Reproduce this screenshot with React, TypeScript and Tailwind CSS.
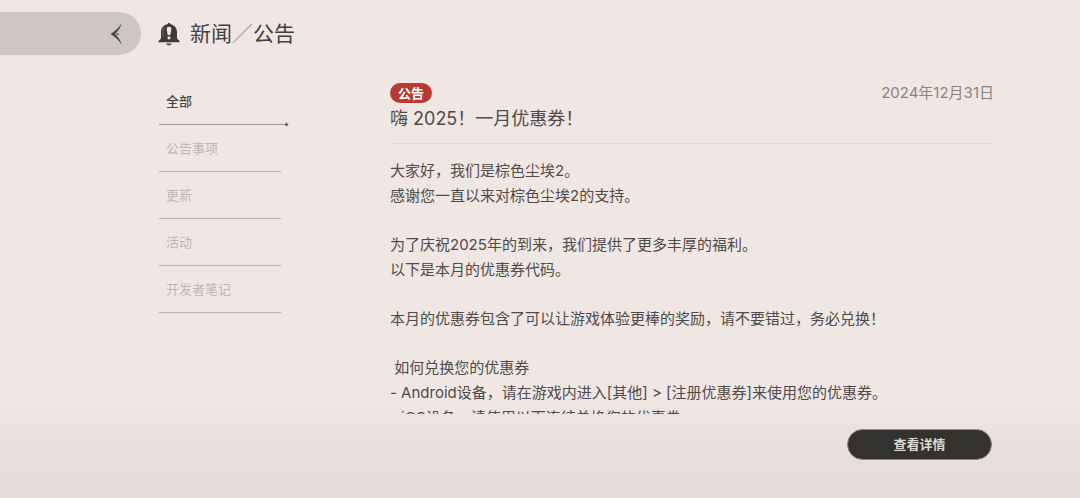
import { useState } from "react";

const CATEGORIES = ["全部", "公告事项", "更新", "活动", "开发者笔记"];

const PARAGRAPHS = [
  ["大家好，我们是棕色尘埃2。", "感谢您一直以来对棕色尘埃2的支持。"],
  ["为了庆祝2025年的到来，我们提供了更多丰厚的福利。", "以下是本月的优惠券代码。"],
  ["本月的优惠券包含了可以让游戏体验更棒的奖励，请不要错过，务必兑换！"],
  [
    " 如何兑换您的优惠券",
    "- Android设备，请在游戏内进入[其他] > [注册优惠券]来使用您的优惠券。",
    "- iOS设备，请使用以下连结兑换您的优惠券。",
  ],
];

function BackIcon() {
  return (
    <svg className="h-6 w-4" viewBox="0 0 16 24" aria-hidden="true">
      <path
        d="M13 1C10 5.500 6 9.500 1.500 12C6 14.500 10 18.500 13 23C11.500 18.500 9 14.500 6 12C9 9.500 11.500 5.500 13 1Z"
        fill="#4a4643"
      />
      <circle cx="8.500" cy="12" r="1.100" fill="#5c5855" />
    </svg>
  );
}

function BellIcon() {
  return (
    <svg className="h-6 w-[22px]" viewBox="0 0 22 24" aria-hidden="true">
      <path
        fillRule="evenodd"
        d="M11 0.500L12.800 2.200C17 3.200 19 6.300 19 10.500V16.500L21.500 19V20.200H0.500V19L3 16.500V10.500C3 6.300 5 3.200 9.200 2.200ZM11 4.800C9.300 4.800 8.500 6 8.700 7.800L9.700 13H12.300L13.300 7.800C13.500 6 12.700 4.800 11 4.800ZM11 14.200A1.600 1.600 0 1 0 11 17.400A1.600 1.600 0 1 0 11 14.200Z"
        fill="#3d3a38"
      />
      <path d="M5 15V10.500C5 7.500 5.800 5.700 7.300 4.800" fill="none" stroke="#8c8784" strokeWidth="0.600" />
      <path d="M8 21.500H14L12.500 23.300H9.500Z" fill="#4a4643" />
    </svg>
  );
}

export default function App() {
  const [active, setActive] = useState(0);

  return (
    <div className="flex h-screen flex-col overflow-hidden bg-[#f0e7e4] bg-[linear-gradient(to_top,#e5dddb_0px,#e7dfdc_50px,#f0e7e4_96px)] font-['Inter','Noto_Sans_CJK_SC',sans-serif] text-[#4f4b48]">
      <header className="flex shrink-0 items-center gap-[17px] pt-3">
        <button
          type="button"
          aria-label="返回"
          className="flex h-[43px] w-[141px] items-center justify-end rounded-r-full bg-[#cdc6c3] pr-4"
        >
          <BackIcon />
        </button>
        <div className="flex items-center gap-[10px]">
          <BellIcon />
          <h1 className="text-[21px] leading-8 text-[#44403e]">
            新闻<span className="text-[#8f8986]">／</span>公告
          </h1>
        </div>
      </header>

      <div className="flex min-h-0 flex-1 pr-[86px] pl-[159px]">
        <nav className="w-[129px] shrink-0 pt-[23px]">
          <ul>
            {CATEGORIES.map((name, i) => (
              <li key={name}>
                <button
                  type="button"
                  onClick={() => setActive(i)}
                  className={
                    i === active
                      ? "block w-full px-[7px] pt-[13px] pb-[13px] text-left text-[13px] leading-5 font-medium text-[#4a4644]"
                      : "block w-full px-[7px] pt-[13px] pb-[13px] text-left text-[13px] leading-5 text-[#beb6b3]"
                  }
                >
                  {name}
                </button>
                {i === active ? (
                  <div className="flex h-px items-center">
                    <span className="h-px flex-1 bg-[#a19996]" />
                    <span className="size-[3px] shrink-0 rotate-45 bg-[#6a6461]" />
                  </div>
                ) : (
                  <div className="mr-[7px] h-px bg-[#bab2af]" />
                )}
              </li>
            ))}
          </ul>
        </nav>

        <article className="ml-[102px] flex min-w-0 flex-1 flex-col pt-7">
          <header className="shrink-0 border-b border-[#e2dad7] pb-2">
            <div className="flex items-start justify-between">
              <span className="rounded-full bg-[#b83a33] px-2 text-[13px] leading-5 font-bold text-white">公告</span>
              <time dateTime="2024-12-31" className="text-[15px] leading-5 text-[#8a8481]">
                2024年12月31日
              </time>
            </div>
            <h2 className="text-lg leading-8">嗨 2025！一月优惠券！</h2>
          </header>
          <div className="flex min-h-0 flex-1 flex-col gap-6 overflow-hidden pt-[14px] text-[15px] leading-[25px] whitespace-pre-wrap">
            {PARAGRAPHS.map((lines) => (
              <p key={lines[0]}>{lines.join("\n")}</p>
            ))}
          </div>
        </article>
      </div>

      <footer className="flex shrink-0 justify-end pt-[15px] pr-[88px] pb-[38px]">
        <button
          type="button"
          className="h-[31px] w-[145px] rounded-full border border-[#8b8782] bg-[#34322f] text-[13px] font-bold text-[#dcd8d2]"
        >
          查看详情
        </button>
      </footer>
    </div>
  );
}
